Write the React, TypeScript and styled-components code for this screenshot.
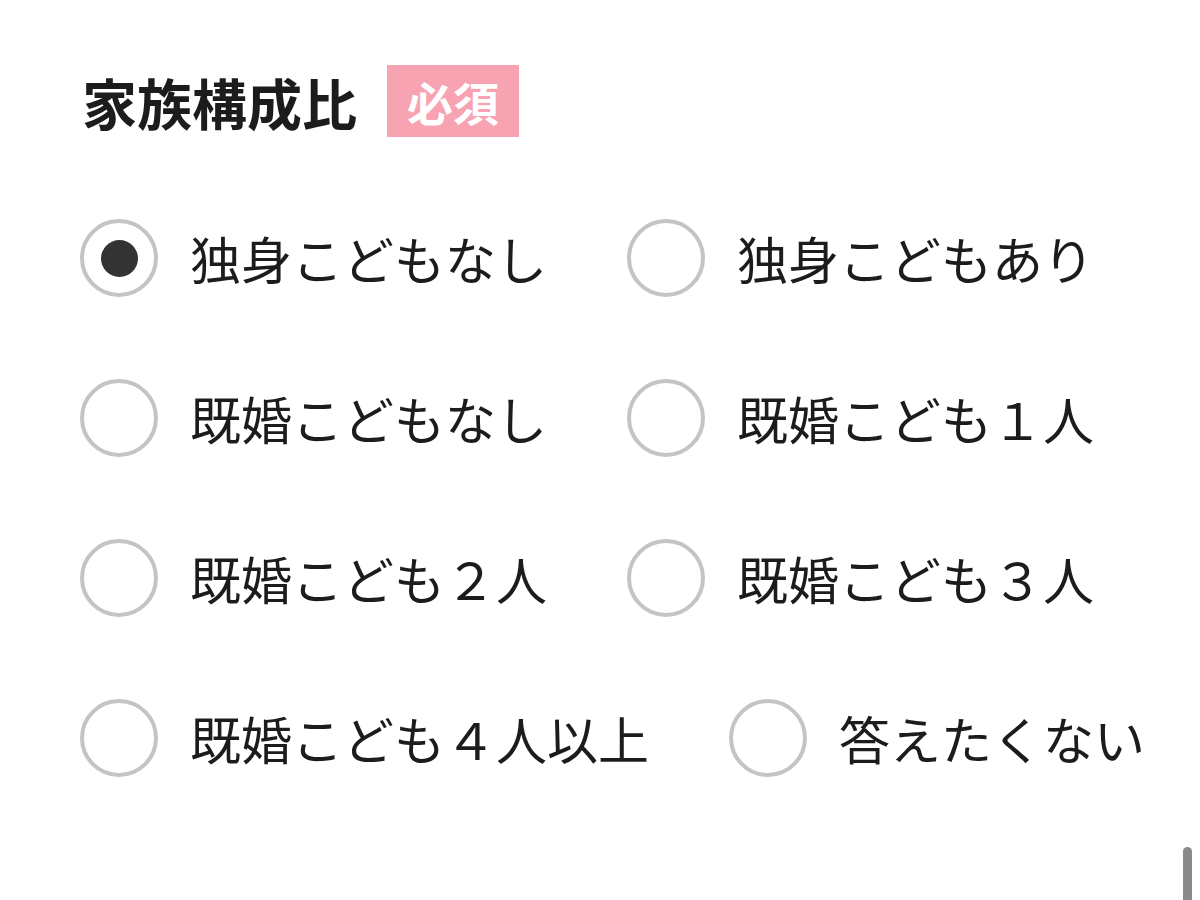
import React, { useState } from "react";
import styled, { createGlobalStyle } from "styled-components";

const GlobalStyle = createGlobalStyle`
  html, body {
    margin: 0;
    padding: 0;
    background: #fff;
  }
  body {
    font-family: "Noto Sans CJK JP", "Noto Sans", sans-serif;
    color: #222;
  }
`;

const Page = styled.div`
  position: relative;
  width: 1200px;
  height: 900px;
  overflow: hidden;
  box-sizing: border-box;
  padding: 65px 0 0 80px;
`;

const Header = styled.div`
  display: flex;
  align-items: center;
  gap: 30px;
`;

const Title = styled.h2`
  margin: 0 0 0 2px;
  font-size: 55px;
  font-weight: 700;
  line-height: 72px;
  color: #1c1c1c;
`;

const Badge = styled.span`
  display: inline-flex;
  align-items: center;
  justify-content: center;
  height: 72px;
  padding: 0 20px;
  background: #f8a3b2;
  color: #fff;
  font-size: 46px;
  font-weight: 700;
  line-height: 1;
`;

const Options = styled.div`
  display: flex;
  flex-wrap: wrap;
  column-gap: 80px;
  row-gap: 82px;
  margin-top: 82px;
  width: 1110px;
`;

const Item = styled.label`
  display: flex;
  align-items: center;
  gap: 32px;
  height: 78px;
  cursor: pointer;
`;

const Radio = styled.span<{ $checked: boolean }>`
  position: relative;
  flex: none;
  width: 78px;
  height: 78px;
  box-sizing: border-box;
  border: 4px solid #c4c4c4;
  border-radius: 50%;
  background: #fff;
  &::after {
    content: "";
    position: absolute;
    left: 50%;
    top: 50%;
    width: 37px;
    height: 37px;
    margin: -18.5px 0 0 -18.5px;
    border-radius: 50%;
    background: #333;
    display: ${(props) => (props.$checked ? "block" : "none")};
  }
`;

const Text = styled.span`
  font-size: 51px;
  line-height: 1;
  color: #1c1c1c;
  white-space: nowrap;
`;

const ScrollThumb = styled.div`
  position: absolute;
  right: 8px;
  top: 847px;
  width: 9px;
  height: 70px;
  border-radius: 5px;
  background: #8a8a8a;
`;

const options = [
  "独身こどもなし",
  "独身こどもあり",
  "既婚こどもなし",
  "既婚こども１人",
  "既婚こども２人",
  "既婚こども３人",
  "既婚こども４人以上",
  "答えたくない",
];

const App: React.FC = () => {
  const [selected, setSelected] = useState<string>(options[0]);

  return (
    <Page>
      <GlobalStyle />
      <Header>
        <Title>家族構成比</Title>
        <Badge>必須</Badge>
      </Header>
      <Options>
        {options.map((option) => (
          <Item key={option} onClick={() => setSelected(option)}>
            <Radio $checked={selected === option} />
            <Text>{option}</Text>
          </Item>
        ))}
      </Options>
      <ScrollThumb />
    </Page>
  );
};

export default App;
